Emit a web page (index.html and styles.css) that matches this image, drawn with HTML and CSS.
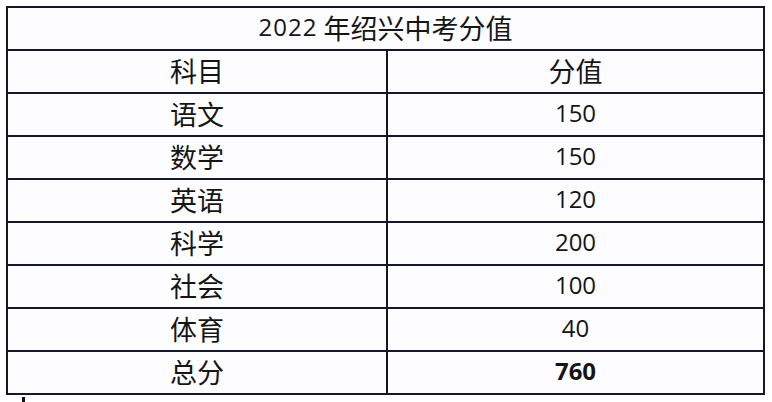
FILE: index.html
```html
<!DOCTYPE html>
<html lang="zh">
<head>
<meta charset="utf-8">
<title>2022年绍兴中考分值</title>
<link rel="stylesheet" href="styles.css">
</head>
<body>
<div class="page">
  <div class="grid">
    <div class="cell title"><span class="num">2022</span> 年绍兴中考分值</div>
    <div class="cell">科目</div><div class="cell">分值</div>
    <div class="cell">语文</div><div class="cell num">150</div>
    <div class="cell">数学</div><div class="cell num">150</div>
    <div class="cell">英语</div><div class="cell num">120</div>
    <div class="cell">科学</div><div class="cell num">200</div>
    <div class="cell">社会</div><div class="cell num">100</div>
    <div class="cell">体育</div><div class="cell num">40</div>
    <div class="cell">总分</div><div class="cell num bold">760</div>
  </div>
  <span class="mark"></span>
</div>
</body>
</html>
```
FILE: styles.css
```css
html, body {
  margin: 0;
  background: #ffffff;
}
.page {
  position: relative;
  width: 772px;
  height: 402px;
  padding: 6px 0 0 6px;
  box-sizing: border-box;
}
.grid {
  display: grid;
  grid-template-columns: 378px 375px;
  grid-template-rows: 41px repeat(8, 41px);
  gap: 2px;
  padding: 2px;
  width: 759px;
  box-sizing: border-box;
  background: #16162a;
}
.cell {
  background: #fdfdff;
  display: flex;
  align-items: center;
  justify-content: center;
  font-family: "Noto Sans CJK SC", "Noto Sans", sans-serif;
  font-size: 27px;
  line-height: 1;
  color: #151515;
  padding-bottom: 3px;
  box-sizing: border-box;
}
.title {
  grid-column: 1 / 3;
  white-space: pre;
}
.num {
  font-family: "Open Sans", "Liberation Sans", sans-serif;
  font-size: 24px;
}
.title .num {
  letter-spacing: 1px;
}
.bold {
  font-weight: 700;
}
.mark {
  position: absolute;
  left: 22px;
  top: 397px;
  width: 3px;
  height: 5px;
  background: #111;
}
```
